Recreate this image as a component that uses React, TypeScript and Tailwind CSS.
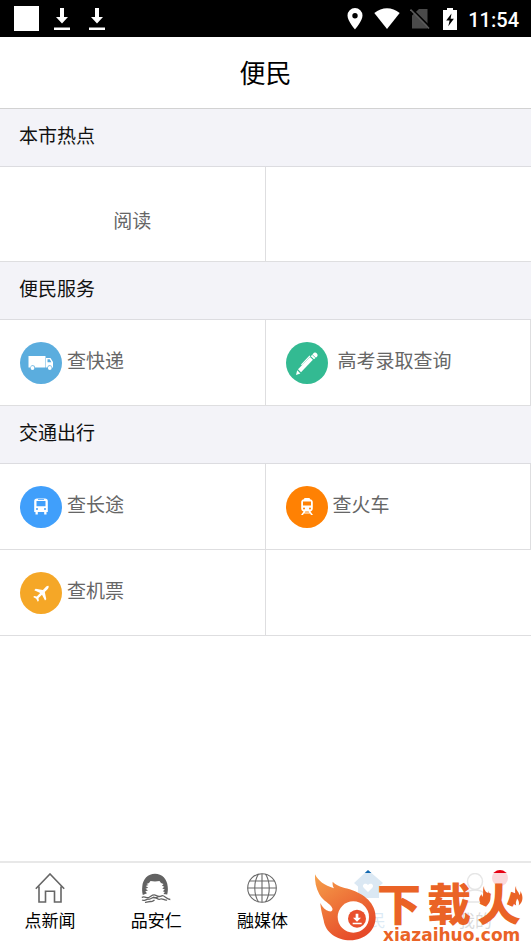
import type { ReactNode } from 'react'

interface Service {
  label: string
  icon?: ReactNode
  color?: string
  indent?: boolean // Extra gap between the icon and its label
}

const TruckIcon = () => (
  <svg viewBox="0 0 42 42" className="size-full" fill="#fff">
    <path d="M8.500 14h17v11.500h-10.500a2.300 2.300 0 0 0-4.600 0H8.500z" />
    <path
      fillRule="evenodd"
      d="M26 16h4.500l2.500 4v5.500h-1a2.300 2.300 0 0 0-4.600 0H26zM27.500 17.300v3h3.900l-1.700-3z"
    />
    <circle cx="12.500" cy="26" r="1.900" />
    <circle cx="29.800" cy="26" r="1.900" />
  </svg>
)

const PenIcon = () => (
  <svg viewBox="0 0 42 42" className="size-full" fill="#fff">
    <path d="M10 33l1.200-4.800 3.200 3.300z" />
    <path d="M12 27.300L24 15l2.900 2.800L15 30.300z" />
    <path d="M24.800 14.200l2.500-2.600c.5-1.300 2.600-1.300 3.600-.2 1.100 1.100.9 2.700-.2 3.600l-2.700 2.200z" />
    <path d="M15 22.500l8.500-9 .9.800-8.500 9z" />
    <path d="M26.200 12.600l4 3.700" stroke="#33ba92" strokeWidth=".7" />
  </svg>
)

const BusIcon = () => (
  <svg viewBox="0 0 42 42" className="size-full" fill="#fff">
    <path
      fillRule="evenodd"
      d="M17 12.500h8c1.800 0 2.800 1 2.800 2.700V26h-1.300v2.500h-2.300V26h-6.400v2.500h-2.300V26h-1.300V15.200c0-1.700 1-2.700 2.800-2.700zM16.500 15v5.300h9V15zM18 13.200v.7h6v-.7zM17 22a1 1 0 1 0 0 2 1 1 0 0 0 0-2zm8 0a1 1 0 1 0 0 2 1 1 0 0 0 0-2z"
    />
  </svg>
)

const TrainIcon = () => (
  <svg viewBox="0 0 42 42" className="size-full" fill="#fff">
    <path
      fillRule="evenodd"
      d="M18.500 12h5l.6 1.200c1.600.3 2.700 1.300 2.700 3v6.300c0 1.500-1 2.600-2.300 2.900l2.500 3.600h-2l-.9-1.400h-6.200L17 29h-2l2.500-3.600c-1.300-.3-2.300-1.400-2.300-2.900v-6.300c0-1.700 1.100-2.700 2.700-3zM17 15.500v4h8v-4zM18 21.500a1 1 0 1 0 0 2 1 1 0 0 0 0-2zm6 0a1 1 0 1 0 0 2 1 1 0 0 0 0-2zM19.400 25.500l-.7 1h4.600l-.7-1z"
    />
  </svg>
)

const PlaneIcon = () => (
  <svg viewBox="0 0 42 42" className="size-full" fill="#fff">
    <path d="M28.500 14c.7.700-.3 2.500-1.200 3.500l-2.500 2.500 1.500 7.200-1.300 1.300-3-5.800-3.500 3.400.3 2.600-1 1-1.600-3-3-1.600 1-1 2.600.3 3.400-3.500-5.900-2.700 1.300-1.400 7.300 1.200 2.400-2.600c1-1 2.600-2 3.200-1.400z" />
  </svg>
)

const sections: { title: string; items: Service[] }[] = [
  {
    title: '便民服务',
    items: [
      { label: '查快递', icon: <TruckIcon />, color: 'bg-[#5badde]' },
      { label: '高考录取查询', icon: <PenIcon />, color: 'bg-[#33ba92]', indent: true },
    ],
  },
  {
    title: '交通出行',
    items: [
      { label: '查长途', icon: <BusIcon />, color: 'bg-[#409ffb]' },
      { label: '查火车', icon: <TrainIcon />, color: 'bg-[#ff8103]' },
      { label: '查机票', icon: <PlaneIcon />, color: 'bg-[#f5a727]' },
    ],
  },
]

const DownloadIcon = () => (
  <svg viewBox="0 0 18 24" className="h-6 w-[18px]" fill="#fff">
    <path d="M7 1h4v9h4l-6 6.500L3 10h4zM1 20.500h16V23H1z" />
  </svg>
)

const StatusBar = () => (
  <div className="flex h-[37px] items-center justify-between bg-black pl-3.5 pr-3">
    <div className="flex items-center gap-[17px]">
      <span className="mr-[-3px] size-[25px] bg-white" />
      <DownloadIcon />
      <DownloadIcon />
    </div>
    <div className="flex items-center">
      <svg viewBox="0 0 16 22" className="mr-[11px] h-[22px] w-4" fill="#fff">
        <path
          fillRule="evenodd"
          d="M8 0a7.500 7.500 0 0 0-7.500 7.500C.5 13 8 21.500 8 21.500S15.500 13 15.500 7.500A7.500 7.500 0 0 0 8 0zm0 5a2.700 2.700 0 1 1 0 5.400A2.700 2.700 0 0 1 8 5z"
        />
      </svg>
      <svg viewBox="0 0 26 22" className="mr-[10px] h-[22px] w-[26px]" fill="#fff">
        <path d="M.3 5C8-1.300 18-1.300 25.700 5L13 21z" />
      </svg>
      <svg viewBox="0 0 20 22" className="mr-3 h-[22px] w-5">
        <path d="M9 1h8.500v19.500H2V7.500z" fill="#4a4a4a" />
        <path d="M1.500.5L20 19" stroke="#000" strokeWidth="1.600" />
        <path d="M.5 1.500L19 20.500" stroke="#5a5a5a" strokeWidth="1.600" />
      </svg>
      <svg viewBox="0 0 16 22" className="mr-[10px] h-[22px] w-4" fill="#fff">
        <path
          fillRule="evenodd"
          d="M5 0h6v2h4v20H1V2h4zM9.500 5.500l-5.300 7h3.400l-1.300 5.700 5.600-7.500H8.600z"
        />
      </svg>
      <span className="pt-0.5 font-[Roboto] text-[20px] font-medium leading-6 text-white">11:54</span>
    </div>
  </div>
)

const SectionTitle = ({ children }: { children: ReactNode }) => (
  <h2 className="border-b border-[#dcdce0] bg-[#f3f3f8] px-[19px] pb-[18px] pt-3 text-[19px] leading-[27px] text-[#111]">
    {children}
  </h2>
)

const ServiceCell = ({ item }: { item: Service }) => (
  <a
    href="#"
    className="flex h-[86px] items-center border-b border-r border-[#dedee0] pl-5 text-[19px] leading-7 text-[#666]"
  >
    <span className={`size-[42px] shrink-0 rounded-full ${item.color}`}>{item.icon}</span>
    <span className={item.indent ? 'ml-2.5 pb-1.5' : 'ml-[5px] pb-1.5'}>{item.label}</span>
  </a>
)

const HomeIcon = () => (
  <svg viewBox="0 0 30 30" className="size-[30px]" fill="none" stroke="#666" strokeWidth="1.600">
    <path d="M.8 15.800L15 1l14.200 14.800M4 13.500V29h6.500V18.300h9V29H26V13.500" />
  </svg>
)

const SceneryIcon = () => (
  <svg viewBox="0 0 30 30" className="size-[30px]" fill="#626262">
    <path d="M1.800 22C1 19 1 16 1.300 13.500 1.800 6 7 .7 14 .7S26.200 6 26.700 13.500c.3 2.500.3 5-.5 8l-3.700-.5 1.300-2-2-.8 2-1.700-2.500-1 2-1.800-2.300-1 1.500-1.700-2.500-1-1.500-2-4.500.6-4.500-.6-1.500 2-2.500 1L7.500 12l-2.800 1 2.500 1.800-2.700 1 2.500 1.700-2.700.8 1.700 2z" />
    <g fill="none" stroke="#626262" strokeWidth="1.300">
      <path d="M.8 24.500c3-2 4.500 1.200 7 0s4-3.700 7-2.200 3.500 1.500 6 .5 4.500 3.500 8.500 3.700" />
      <path d="M1 27c3 1.500 4-1.200 6.500-.8s4-2.700 6.500-1.700 3.500 2.700 5.500 1.500 4 2 6.500 1" />
      <path d="M4 29.300c2.500.3 3.500-1 5.500-.8s2 .3 4-1.500" />
      <path d="M12 24c1.500 2 3.500-.5 5 1" />
    </g>
  </svg>
)

const GlobeIcon = () => (
  <svg viewBox="0 0 30 30" className="size-[30px]" fill="none" stroke="#6a6a6a" strokeWidth="1.100">
    <circle cx="15" cy="15" r="14.300" />
    <path d="M15 .7v28.600M.7 15h28.600M3 8h24M3 22h24M11.500 1C6.500 9 6.500 21 11.500 29M18.500 1c5 8 5 20 0 28" />
  </svg>
)

const ServiceIcon = () => (
  <svg viewBox="0 0 30 30" className="size-[30px] overflow-visible">
    <path d="M14-3L29 10l-4 3.500V25H4V13.500L0 10z" fill="#1268b0" />
    <path d="M14 19l-4.500-4.500c-2-3 2-5.500 4.500-2.500 2.500-3 6.500-.5 4.500 2.500z" fill="#fff" />
  </svg>
)

const MineIcon = () => (
  <svg viewBox="0 0 30 30" className="size-[30px]" fill="none" stroke="#555" strokeWidth="1.400">
    <ellipse cx="15" cy="8.500" rx="7.500" ry="8" />
    <path d="M3 29c0-8 5-12 12-12s12 4 12 12z" />
  </svg>
)

const tabs = [
  { label: '点新闻', icon: <HomeIcon /> },
  { label: '品安仁', icon: <SceneryIcon /> },
  { label: '融媒体', icon: <GlobeIcon /> },
  { label: '便民', icon: <ServiceIcon />, active: true },
  { label: '我的', icon: <MineIcon />, badge: true },
]

const FlameLogo = () => (
  <svg viewBox="42 54 189 204" className="h-[68px] w-[63px] shrink-0">
    <defs>
      <linearGradient id="flame" x1="0" y1="0" x2=".6" y2="1">
        <stop offset="0" stopColor="#f6a04a" />
        <stop offset=".5" stopColor="#ee7439" />
        <stop offset="1" stopColor="#e64a29" />
      </linearGradient>
    </defs>
    <path
      d="M45 58c10 20 28 33 57 42-4-7-5-13-4-20 12 14 30 16 51 23 45 14 78 43 78 84 0 40-34 69-76 69-42 0-75-24-80-60-2-10-9-32-10-52 6 13 16 22 26 25 8 2 12-3 10-9-8-18-25-17-39-42-10-18-14-38-13-60z"
      fill="url(#flame)"
    />
    <circle cx="160" cy="186" r="47" fill="#fff" />
    <circle cx="171" cy="191" r="27" fill="#e9502c" />
    <path d="M167 176h8v12h8l-12 12-12-12h8zM158 203h27v5h-27z" fill="#fff" />
  </svg>
)

const SideFlame = ({ className }: { className: string }) => (
  <svg viewBox="0 0 14 24" className={className} fill="#ea6326">
    <path d="M6 0c-1 6 4 7 3.500 11 1.500-1 1.800-3 1.300-5C14 11 15 19 9 23c1-4-.5-6-2-8-.5 3-2 4-1 8-7-3-7-9-3-13 .5 1 0 2 1 3 2-4-.5-8 2-13z" />
  </svg>
)

const Watermark = () => (
  <div className="pointer-events-none absolute bottom-0 right-0 flex h-[71px] w-[217px] items-start bg-white/85">
    <FlameLogo />
    <div className="relative flex flex-col whitespace-nowrap text-[#ea6326]">
      <div className="flex gap-1.5 pt-2 pb-1 text-[44px] font-black leading-[42px]">
        <span>下</span>
        <span>载</span>
        <span>火</span>
      </div>
      <span className="pl-1.5 font-['DejaVu_Sans',sans-serif] text-[17px] font-bold leading-4">
        xiazaihuo.com
      </span>
      <SideFlame className="absolute right-[30px] top-3 h-[22px] w-3" />
      <SideFlame className="absolute -right-0.5 top-3 h-[22px] w-3" />
    </div>
  </div>
)

const TabBar = () => (
  <nav className="relative mt-auto grid h-[83px] shrink-0 grid-cols-5 border-t-2 border-[#e8e8e8] bg-white">
    {tabs.map((tab) => (
      <button
        key={tab.label}
        type="button"
        className={`flex flex-col items-center gap-1 pt-2.5 pr-1.5 text-[17px] leading-[26px] ${
          tab.active ? 'text-[#1274bc]' : 'text-black'
        }`}
      >
        <span className="relative">
          {tab.icon}
          {tab.badge && (
            <span className="absolute -right-[18px] -top-[3px] size-4 rounded-full bg-[#e60012]" />
          )}
        </span>
        {tab.label}
      </button>
    ))}
    <Watermark />
  </nav>
)

const App = () => {
  return (
    <div className="flex min-h-screen flex-col bg-white font-['Noto_Sans_CJK_SC',sans-serif]">
      <StatusBar />
      <header className="border-b border-[#d2d2d2] pb-[18px] pt-4 text-center">
        <h1 className="text-[26px] leading-[37px] text-black">便民</h1>
      </header>

      <main>
        <section>
          <SectionTitle>本市热点</SectionTitle>
          <div className="grid grid-cols-2 border-b border-[#dedee0]">
            <a
              href="#"
              className="flex h-[94px] items-center justify-center border-r border-[#dedee0] pt-3 text-[19px] leading-7 text-[#666]"
            >
              阅读
            </a>
          </div>
        </section>

        {sections.map((section) => (
          <section key={section.title}>
            <SectionTitle>{section.title}</SectionTitle>
            <div className="grid grid-cols-2">
              {section.items.map((item) => (
                <ServiceCell key={item.label} item={item} />
              ))}
              {/* Keep the row line going under an unfilled cell */}
              {section.items.length % 2 === 1 && <div className="border-b border-[#dedee0]" />}
            </div>
          </section>
        ))}
      </main>

      <TabBar />
    </div>
  )
}

export default App
